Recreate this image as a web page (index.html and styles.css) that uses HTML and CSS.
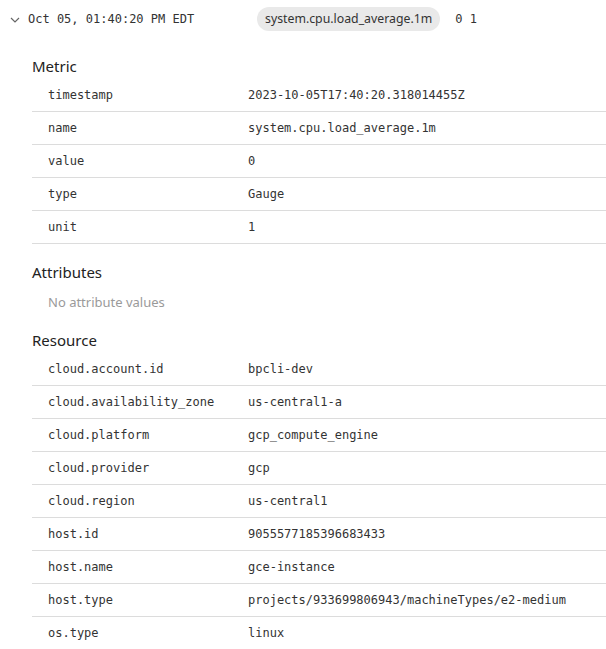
FILE: index.html
```html
<!DOCTYPE html>
<html>
<head>
<meta charset="utf-8">
<link rel="stylesheet" href="styles.css">
</head>
<body>
<div class="entry">
  <div class="summary">
    <svg class="chevron" width="10" height="6" viewBox="0 0 10 6"><path d="M1 1 L5 5 L9 1" fill="none" stroke="#666" stroke-width="1.2"/></svg>
    <span class="time">Oct 05, 01:40:20 PM EDT</span>
    <span class="pill">system.cpu.load_average.1m</span>
    <span class="nums">0 1</span>
  </div>
  <div class="details">
    <h3 class="heading">Metric</h3>
    <div class="table">
      <div class="row"><span class="key">timestamp</span><span class="val">2023-10-05T17:40:20.318014455Z</span></div>
      <div class="row"><span class="key">name</span><span class="val">system.cpu.load_average.1m</span></div>
      <div class="row"><span class="key">value</span><span class="val">0</span></div>
      <div class="row"><span class="key">type</span><span class="val">Gauge</span></div>
      <div class="row"><span class="key">unit</span><span class="val">1</span></div>
    </div>
    <h3 class="heading">Attributes</h3>
    <div class="empty">No attribute values</div>
    <h3 class="heading res">Resource</h3>
    <div class="table">
      <div class="row"><span class="key">cloud.account.id</span><span class="val">bpcli-dev</span></div>
      <div class="row"><span class="key">cloud.availability_zone</span><span class="val">us-central1-a</span></div>
      <div class="row"><span class="key">cloud.platform</span><span class="val">gcp_compute_engine</span></div>
      <div class="row"><span class="key">cloud.provider</span><span class="val">gcp</span></div>
      <div class="row"><span class="key">cloud.region</span><span class="val">us-central1</span></div>
      <div class="row"><span class="key">host.id</span><span class="val">9055577185396683433</span></div>
      <div class="row"><span class="key">host.name</span><span class="val">gce-instance</span></div>
      <div class="row"><span class="key">host.type</span><span class="val">projects/933699806943/machineTypes/e2-medium</span></div>
      <div class="row"><span class="key">os.type</span><span class="val">linux</span></div>
    </div>
  </div>
</div>
</body>
</html>
```
FILE: styles.css
```css
html, body {
  margin: 0;
  padding: 0;
  background: #fff;
}
body {
  font-family: "Noto Sans", "Open Sans", sans-serif;
  color: #2b2b2b;
}
.summary {
  display: flex;
  align-items: center;
  height: 38px;
  padding-left: 10px;
}
.chevron {
  flex: none;
  margin-right: 8px;
  margin-top: 1px;
}
.time {
  font-family: "DejaVu Sans Mono", monospace;
  font-size: 12px;
  color: #333;
  width: 229px;
}
.pill {
  background: #e9e9e9;
  border-radius: 12px;
  height: 24px;
  line-height: 24px;
  padding: 0 8px;
  font-size: 12.3px;
  color: #333;
}
.nums {
  font-family: "DejaVu Sans Mono", monospace;
  font-size: 12px;
  color: #333;
  margin-left: 15px;
}
.details {
  padding-left: 32px;
}
.heading {
  margin: 17px 0 2px 0;
  font-size: 15px;
  font-weight: 400;
  line-height: 22px;
  color: #222;
}
.heading.res {
  margin: 16px 0 2px 0;
}
.row {
  display: flex;
  align-items: center;
  height: 32px;
  border-bottom: 1px solid #dcdcdc;
  padding-left: 16px;
  font-family: "DejaVu Sans Mono", monospace;
  font-size: 12px;
  color: #333;
}
.key {
  width: 200px;
  flex: none;
}
.empty {
  padding-left: 16px;
  font-size: 13px;
  line-height: 22px;
  margin-top: 8px;
  color: #9a9a9a;
}
```
